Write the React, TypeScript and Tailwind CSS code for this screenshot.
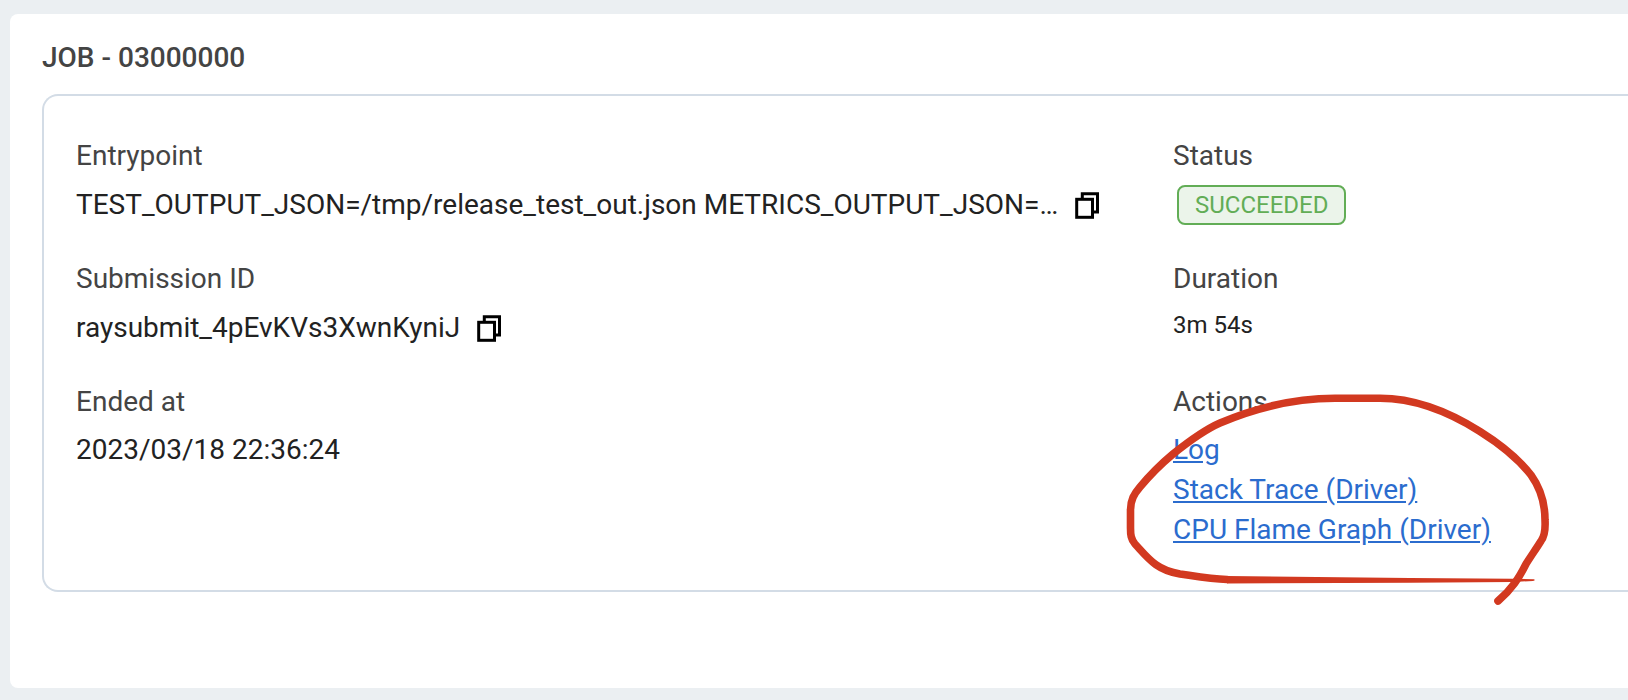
import type { ReactNode } from "react";

function CopyIcon() {
  return (
    <svg width="26" height="28" viewBox="0 0 26 28" fill="none" stroke="#000" strokeWidth="3" aria-hidden="true">
      <path d="M8.300 7.400V2.800H23.500V21H19.800" />
      <rect x="2.700" y="8.300" width="15.800" height="18" />
    </svg>
  );
}

function CopyButton({ label }: { label: string }) {
  return (
    <button type="button" aria-label={label} className="shrink-0 cursor-pointer">
      <CopyIcon />
    </button>
  );
}

function Field({ label, children }: { label: string; children: ReactNode }) {
  return (
    <div className="relative flex min-w-0 flex-col items-start gap-2">
      <dt className="text-[#444444]">{label}</dt>
      <dd className="flex min-h-[42px] max-w-full items-center gap-4">{children}</dd>
    </div>
  );
}

function ActionLink({ children }: { children: ReactNode }) {
  return (
    <a href="#" className="text-[#2b6cce] underline">
      {children}
    </a>
  );
}

function Highlight() {
  return (
    <svg
      className="pointer-events-none absolute top-0 -left-[53px] max-w-none"
      width="440"
      height="232"
      viewBox="1120 382 440 232"
      aria-hidden="true"
    >
      <path
        d="M1227 579.500C1210 579 1194 576 1180 574C1156 570 1148 558 1135 544C1131 539 1130.500 535 1130.500 528V510C1130.500 500 1134 494 1140 487C1150 475 1161 464 1173 454C1188 442 1204 430 1220 423C1248 411 1288 398.500 1335 398.300H1380C1405 398.300 1438 405 1480 431.500C1500 444 1517 457 1531 475C1541 489 1545 505 1545 520C1545.500 529 1545 536 1541 541C1536 549 1531 556 1526 564C1519 578 1512 589 1498 601"
        fill="none"
        stroke="#d23920"
        strokeWidth="7.6"
        strokeLinecap="round"
        strokeLinejoin="round"
      />
      <path
        d="M1227 576L1340 577.200L1410 578L1513 578.800L1534 579.300Q1536 580.300 1533 581L1513 582L1410 582.700L1340 583L1227 583.400Z"
        fill="#d23920"
      />
    </svg>
  );
}

export default function App() {
  return (
    <div className="min-h-screen overflow-x-hidden bg-[#ebeff2] pt-3.5 pb-3 pl-2.5 font-['Roboto',sans-serif] text-[28px] leading-10 text-[#222222]">
      <main className="rounded-l-lg bg-white pt-6 pb-24 pl-8">
        <h1 className="font-medium text-[#444444]">JOB - 03000000</h1>
        <dl className="mt-4 grid grid-cols-[minmax(0,1fr)_455px] gap-y-[33px] rounded-l-2xl border-2 border-r-0 border-[#d3dce6] py-10 pl-8">
          <Field label="Entrypoint">
            <span className="truncate">TEST_OUTPUT_JSON=/tmp/release_test_out.json METRICS_OUTPUT_JSON=…</span>
            <CopyButton label="Copy entrypoint" />
          </Field>
          <Field label="Status">
            <span className="ml-1 rounded-lg border-2 border-[#62ad56] bg-[#ebf4ea] px-4 text-2xl leading-9 text-[#62ad56]">
              SUCCEEDED
            </span>
          </Field>
          <Field label="Submission ID">
            <span className="truncate">raysubmit_4pEvKVs3XwnKyniJ</span>
            <CopyButton label="Copy submission ID" />
          </Field>
          <Field label="Duration">
            <span className="self-start text-2xl leading-9">3m 54s</span>
          </Field>
          <Field label="Ended at">
            <span className="self-start">2023/03/18 22:36:24</span>
          </Field>
          <Field label="Actions">
            <span className="flex flex-col items-start">
              <ActionLink>Log</ActionLink>
              <ActionLink>Stack Trace (Driver)</ActionLink>
              <ActionLink>CPU Flame Graph (Driver)</ActionLink>
            </span>
            <Highlight />
          </Field>
        </dl>
      </main>
    </div>
  );
}
